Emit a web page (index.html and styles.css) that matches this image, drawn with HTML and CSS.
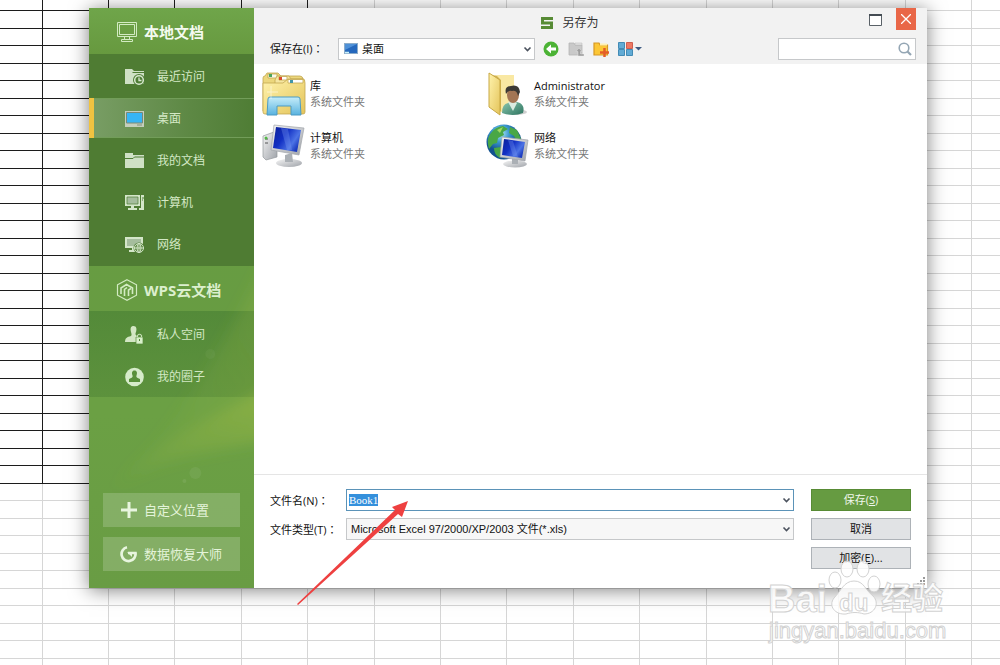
FILE: index.html
```
<!DOCTYPE html>
<html lang="zh-CN">
<head>
<meta charset="utf-8">
<meta name="viewport" content="width=device-width, initial-scale=1">
<title>另存为</title>
<link rel="stylesheet" href="styles.css">
</head>
<body>
<svg class="sheet" aria-hidden="true">
  <defs>
    <pattern id="rows" width="35" height="35" patternUnits="userSpaceOnUse"><path d="M0 10.500H35M0 28.500H35"/></pattern>
    <pattern id="cols" width="332" height="35" patternUnits="userSpaceOnUse"><path d="M42.500 0V35M108.500 0V35M174.500 0V35M241.500 0V35M307.500 0V35"/></pattern>
  </defs>
  <g class="sheet-light"><rect width="100%" height="100%" fill="url(#rows)"/><rect width="100%" height="100%" fill="url(#cols)"/></g>
  <path class="sheet-dark" d="M42.5 0V483M108.5 0V483M174.5 0V483M241.5 0V483M307.5 0V483M0 10.5H307M0 28.5H307M0 45.5H307M0 63.5H307M0 80.5H307M0 98.5H307M0 115.5H307M0 133.5H307M0 150.5H307M0 168.5H307M0 185.5H307M0 203.5H307M0 220.5H307M0 238.5H307M0 255.5H307M0 273.5H307M0 290.5H307M0 308.5H307M0 325.5H307M0 343.5H307M0 360.5H307M0 378.5H307M0 395.5H307M0 413.5H307M0 430.5H307M0 448.5H307M0 465.5H307M0 483.5H307"/>
</svg>

<main class="desktop">
  <section class="dialog" aria-label="另存为">
    <nav class="sidebar">
      <svg class="glow" viewBox="0 0 166 580" preserveAspectRatio="none" aria-hidden="true">
        <defs>
          <linearGradient id="g1" x1="0" y1="1" x2="1" y2="0"><stop offset="0" stop-color="#a5bd45" stop-opacity="0"/><stop offset="1" stop-color="#a5bd45" stop-opacity=".5"/></linearGradient>
          <filter id="soft" x="-20%" y="-20%" width="140%" height="140%"><feGaussianBlur stdDeviation="7"/></filter>
        </defs>
        <g filter="url(#soft)">
          <path d="M18 488C60 440 90 426 190 376V430C110 446 60 450 18 488Z" fill="url(#g1)"/>
          <path d="M30 470C90 420 130 350 190 230V390C120 420 80 430 30 470Z" fill="url(#g1)" opacity=".5"/>
        </g>
        <circle cx="107" cy="465" r="6" fill="#fff" opacity=".06"/><circle cx="96" cy="473" r="2" fill="#fff" opacity=".08"/>
        <circle cx="122" cy="346" r="5" fill="#fff" opacity=".04"/>
      </svg>
      <h2 class="side-head">
        <svg width="22" height="22" viewBox="0 0 22 22" fill="none" stroke="#d3ebc3"><path d="M1.500 1.500H20.500V15.500H1.500ZM3.500 3.500H18.500V13.500H3.500ZM8.500 15.500V18.500M13.500 15.500V18.500M5.500 20.500V18.500H16.500V20.500Z"/></svg>
        <span>本地文档</span>
      </h2>
      <ul class="side-list">
        <li><a href="#recent">
          <svg width="20" height="20" viewBox="0 0 20 20"><path d="M0 2H7L9 4H19V5H8L7 6H19V17H0Z" fill="#cfe0c5"/><circle cx="14" cy="13" r="6" fill="#4f7d35"/><circle cx="14" cy="13" r="4.300" fill="#4f7d35" stroke="#d8e8cf" stroke-width="1.500"/><path d="M14 10.500V13.500H16.500" fill="none" stroke="#d8e8cf" stroke-width="1.300"/></svg>
          最近访问</a></li>
        <li><a class="current" href="#desktop" aria-current="page">
          <svg width="20" height="20" viewBox="0 0 20 20"><path d="M0 2H19V18H0Z" fill="#c5cfbd"/><path d="M1.500 3.500H17.500V14H1.500Z" fill="#36b5f5" stroke="#7a8a76"/><path d="M12 16H17" stroke="#83927c"/></svg>
          桌面</a></li>
        <li><a href="#documents">
          <svg width="20" height="20" viewBox="0 0 20 20"><path d="M0 2H8V4H19V17H0Z" fill="#cfe0c5"/><path d="M0 7.500H8L9.500 6H19" fill="none" stroke="#4f7d35"/></svg>
          我的文档</a></li>
        <li><a href="#computer">
          <svg width="20" height="20" viewBox="0 0 20 20"><path d="M0 2H15V13H0Z" fill="#d4e6c9"/><path d="M2 4H13V11H2Z" fill="#a5bd9d" stroke="#4f7d35" stroke-width=".7"/><path d="M16 2H19V17H14V15H16Z M6 13H9V15H12V17H3V15H6Z" fill="#d4e6c9"/><path d="M17 5H19M17 7H18" stroke="#4f7d35"/></svg>
          计算机</a></li>
        <li><a href="#network">
          <svg width="20" height="20" viewBox="0 0 20 20"><path d="M0 2H18V13H0Z" fill="#d4e6c9"/><path d="M2 4H16V11H2Z" fill="#a5bd9d"/><path d="M7 13H10V15H12V17H4V15H7Z" fill="#d4e6c9"/><circle cx="14" cy="13" r="5.500" fill="#4f7d35"/><g fill="none" stroke="#d4e6c9"><circle cx="14" cy="13" r="4.500"/><ellipse cx="14" cy="13" rx="2" ry="4.500"/><path d="M9.500 13H18.500M14 8.500V17.500"/></g></svg>
          网络</a></li>
      </ul>
      <h2 class="side-head cloud">
        <svg width="22" height="22" viewBox="0 0 22 22" fill="none" stroke="#d3ebc3"><path d="M11 0.800L20.500 5.800V16.200L11 21.200L1.500 16.200V5.800Z" stroke-width="1.200"/><path d="M5 15V9L10.500 5.500L16.500 9V15M8.500 17V10.500L11 8.500M12.500 17V11L15 9.500" stroke-width="1.600"/></svg>
        <span>WPS云文档</span>
      </h2>
      <ul class="side-list lower">
        <li><a href="#private">
          <svg width="20" height="20" viewBox="0 0 20 20"><path d="M8.500 1C11.500 1 12 4 11 7C10 9 10.500 10 12 11V17H0C0 13 2 12 6 11C7 10 6.500 9 6 7C5 3 6 1 8.500 1Z" fill="#d3e6c4"/><path d="M11 12H18V19H11Z" fill="#d9f0cb" stroke="#578b3a" stroke-width=".7"/><path d="M12.500 12V10.500Q14.500 8 16.500 10.500V12" fill="none" stroke="#c5dfb5" stroke-width="1.200"/><path d="M14.500 14V16" stroke="#578b3a"/></svg>
          私人空间</a></li>
        <li><a href="#circle">
          <svg width="20" height="20" viewBox="0 0 20 20"><circle cx="9.500" cy="10" r="9.300" fill="#d6ebca"/><path d="M9.500 3.500C12 3.500 12.500 6 11.500 8.500C11 10 11.500 10.500 15 12V15H4V12C7.500 10.500 8 10 7.500 8.500C6.500 6 7 3.500 9.500 3.500Z" fill="#59903b"/></svg>
          我的圈子</a></li>
      </ul>
      <div class="side-actions">
        <button type="button"><svg width="18" height="18" viewBox="0 0 18 18"><path d="M9 1V17M1 9H17" stroke="#e8f5df" stroke-width="3"/></svg>自定义位置</button>
        <button type="button"><svg width="18" height="18" viewBox="0 0 18 18" fill="none"><path d="M7 2.200A7 7 0 1 0 15.500 8H8" stroke="#e8f5df" stroke-width="2.700"/><path d="M7 7L12 12V8Z" fill="#e8f5df"/></svg>数据恢复大师</button>
      </div>
    </nav>

    <div class="pane">
      <header class="top">
        <div class="titlebar">
          <h1><svg width="14" height="14" viewBox="0 0 14 14"><path d="M1 1H13V4H4V5.500H13V13H1V10H10V8.500H1Z" fill="#578b35"/></svg>另存为</h1>
          <div class="window-buttons">
            <button type="button" class="maximize" aria-label="最大化"><svg width="13" height="12" viewBox="0 0 13 12"><path d="M.5 1V11.500H12.500V1" fill="#fff" stroke="#596167"/><path d="M0 1H13" stroke="#454d54" stroke-width="2"/></svg></button>
            <button type="button" class="close" aria-label="关闭"><svg width="10" height="10" viewBox="0 0 10 10"><path d="M0 0L10 10M10 0L0 10" stroke="#fff" stroke-width="1.300"/></svg></button>
          </div>
        </div>
        <div class="toolbar">
          <label for="place">保存在(I)<span lang="zh-TW">：</span></label>
          <div class="combo place">
            <select id="place"><option>桌面</option></select>
            <svg class="combo-icon" width="14" height="12" viewBox="0 0 14 12"><path d="M0 0H14V11H0Z" fill="#8cacc9"/><path d="M1 1H13V10H1Z" fill="#2568bd"/><path d="M1 1H13L1 7Z" fill="#4f91d8"/><path d="M1 9.500H5" stroke="#c9f0fa" stroke-width="1.500"/></svg>
            <svg class="chevron" width="9" height="7" viewBox="0 0 9 7"><path d="M1.500 1.500L4.500 4.500L7.500 1.500" fill="none" stroke="#4b525e" stroke-width="1.600"/></svg>
          </div>
          <div class="tools">
            <button type="button" aria-label="后退"><svg width="16" height="16" viewBox="0 0 16 16"><circle cx="8" cy="8" r="7.500" fill="#4cb335"/><path d="M3 8L8 3.500V6.500H13V9.500H8V12.500Z" fill="#fff"/></svg></button>
            <button type="button" aria-label="向上"><svg width="16" height="16" viewBox="0 0 16 16"><path d="M1 2H6L7 4H14V14H1Z" fill="#c9c9c9" stroke="#b5b5b5" stroke-width=".8"/><path d="M7 2H14V4H7Z" fill="#e4e4e4" stroke="#b5b5b5" stroke-width=".5"/><path d="M8 10.500L11 7L14 10.500H12.500V13H16V15H10V10.500Z" fill="#9d9d9d" stroke="#eee" stroke-width=".4"/></svg></button>
            <button type="button" aria-label="新建文件夹"><svg width="16" height="16" viewBox="0 0 16 16"><path d="M1 2H6L7 4H14.500V14H1Z" fill="#fcc736" stroke="#d69724" stroke-width="1.200"/><path d="M7 2.500H14V4.500H7Z" fill="#fff0b2"/><path d="M11.500 7V16M7 11.500H16" stroke="#e35d27" stroke-width="2.500"/></svg></button>
            <button type="button" aria-label="视图"><svg width="24" height="16" viewBox="0 0 24 16"><path d="M.5 1.500H6.500V7.500H.5ZM.5 8.500H6.500V14.500H.5ZM8.500 8.500H14.500V14.500H8.500Z" fill="#62abd5" stroke="#438bb5"/><path d="M8.500 1.500H14.500V7.500H8.500Z" fill="#ef7964" stroke="#ce5e50"/><path d="M17 6H24L20.500 9.500Z" fill="#3e5c84"/></svg></button>
          </div>
          <div class="combo search">
            <input type="search" aria-label="搜索">
            <svg class="lens" width="14" height="14" viewBox="0 0 14 14" fill="none" stroke="#94a6b4"><circle cx="6" cy="6" r="4.800" stroke-width="1.600"/><path d="M9.500 9.500L13 13" stroke-width="2.200"/></svg>
          </div>
        </div>
      </header>

      <ul class="files">
        <li>
          <svg width="44" height="44" viewBox="0 0 44 44"><defs><linearGradient id="fold" x2="1" y2="1"><stop stop-color="#fff3ad"/><stop offset="1" stop-color="#e4c45a"/></linearGradient><linearGradient id="blue" x2="0" y2="1"><stop stop-color="#c6edfa"/><stop offset="1" stop-color="#58b2df"/></linearGradient></defs><g stroke="#c3a750" stroke-width=".8"><path d="M1 6Q1 4 3 4L5 1H16L19 4H38Q41 4 41 8V39H1Z" fill="#ecd77d"/><path d="M6 2H15V6H6Z" fill="#f9f8e9"/><path d="M13 8L15 4H27L29 7H42V39H13Z" fill="#f6e6a1"/><path d="M17 4.500H25V8H17Z" fill="#fff"/><path d="M1 11H21L26 7H41Q43 7 43 11V40Q43 42 41 42H3Q1 42 1 40Z" fill="url(#fold)"/><path d="M26 7.500H41V11H26Z" fill="#fff"/></g><path d="M7 2H10V5H7Z" fill="#49a45e"/><path d="M17 5H20V8H17Z" fill="#d84b2c"/><path d="M28 8H31V11H28Z" fill="#4295a8"/><path d="M6 27Q6 25 8 25H36Q38 25 38 27L39 43H29V34H15V43H5Z" fill="url(#blue)" stroke="#4c9bc4"/><path d="M9 14V27M5 20H16" stroke="#fff" opacity=".5"/></svg>
          <div><b>库</b><span>系统文件夹</span></div>
        </li>
        <li>
          <svg width="44" height="44" viewBox="0 0 44 44"><defs><linearGradient id="shirt" x2="1" y2="1"><stop stop-color="#8fcbb2"/><stop offset="1" stop-color="#2c735f"/></linearGradient></defs><path d="M4 3L27 5V38L10 40Z" fill="#d2b452"/><path d="M10 3H28V37L15 40V8Z" fill="#f9e8a3"/><path d="M3 1L14 8V43L3 35Z" fill="url(#fold)" stroke="#c8a845"/><ellipse cx="30" cy="40" rx="11" ry="3" fill="#777" opacity=".35"/><path d="M16 41Q16 32 22 31L28 29L34 31Q39 34 37 41Q27 45 16 41Z" fill="url(#shirt)"/><path d="M22 30L27 28L31 31L27 39Z" fill="#d9ebe0"/><ellipse cx="27" cy="23" rx="6" ry="8" fill="#a37554"/><path d="M20 22Q18 14 25 14Q33 12 34 20L32 24Q31 18 26 19Q22 18 20 22Z" fill="#3c3935"/></svg>
          <div><b>Administrator</b><span>系统文件夹</span></div>
        </li>
        <li>
          <svg width="44" height="44" viewBox="0 0 44 44"><defs><linearGradient id="screen" x2="1" y2=".6"><stop stop-color="#0b1f98"/><stop offset=".45" stop-color="#1230c4"/><stop offset=".8" stop-color="#4c73e5"/><stop offset="1" stop-color="#1c3cc0"/></linearGradient><linearGradient id="metal" x2="1" y2="1"><stop stop-color="#f5f5f5"/><stop offset="1" stop-color="#9fa3a9"/></linearGradient></defs><path d="M1 12L12 8L15 10V33L4 36L1 33Z" fill="url(#metal)" stroke="#94989c" stroke-width=".7"/><path d="M3 15H6M3 19H6" stroke="#555"/><circle cx="4" cy="14" r="1.500" fill="#54b947"/><ellipse cx="27" cy="39" rx="13" ry="4" fill="url(#metal)"/><path d="M23 31L30 29L31 38H23Z" fill="#abb0b5"/><path d="M12 1L42 4L37 31L9 26Z" fill="url(#metal)" stroke="#a1a5aa" stroke-width=".7"/><path d="M14 3L39 6L35 28L11 24Z" fill="url(#screen)"/><path d="M19 4L26 5L30 26L25 26Z" fill="#7997f1" opacity=".35"/></svg>
          <div><b>计算机</b><span>系统文件夹</span></div>
        </li>
        <li>
          <svg width="44" height="44" viewBox="0 0 44 44"><defs><radialGradient id="globe" cx=".4" cy=".25"><stop stop-color="#b4eff8"/><stop offset=".5" stop-color="#3b96cf"/><stop offset="1" stop-color="#12528f"/></radialGradient></defs><circle cx="18" cy="18" r="17.500" fill="url(#globe)"/><path d="M5 9Q9 3 17 2L22 5L17 8L18 11L12 14L11 19L7 20L3 25Q0 15 5 9ZM24 3L31 6L35 15L31 18L28 12L23 9ZM8 24L15 23L19 27L14 34Q8 31 8 24Z" fill="#49a746"/><path d="M11 6L17 3L14 9Z" fill="#9fda63"/><ellipse cx="29" cy="40" rx="12" ry="3.500" fill="url(#metal)"/><path d="M26 32H32V40H26Z" fill="#abb0b5"/><path d="M16 13L42 16L39 37L14 33Z" fill="url(#metal)" stroke="#a1a5aa" stroke-width=".7"/><path d="M18 15L39 18L36 34L16 31Z" fill="url(#screen)"/><path d="M22 16L27 17L32 33L27 32Z" fill="#7997f1" opacity=".35"/></svg>
          <div><b>网络</b><span>系统文件夹</span></div>
        </li>
      </ul>

      <form class="bottom">
        <div class="fields">
          <label for="name">文件名(N)<span lang="zh-TW">：</span></label>
          <div class="combo name">
            <input id="name" type="text" value="Book1" autocomplete="off" spellcheck="false">
            <svg class="chevron" width="9" height="7" viewBox="0 0 9 7"><path d="M1.500 1.500L4.500 4.500L7.500 1.500" fill="none" stroke="#4b525e" stroke-width="1.600"/></svg>
          </div>
          <label for="type">文件类型(T)<span lang="zh-TW">：</span></label>
          <div class="combo type">
            <select id="type"><option>Microsoft Excel 97/2000/XP/2003 文件(*.xls)</option></select>
            <svg class="chevron" width="9" height="7" viewBox="0 0 9 7"><path d="M1.500 1.500L4.500 4.500L7.500 1.500" fill="none" stroke="#4b525e" stroke-width="1.600"/></svg>
          </div>
        </div>
        <div class="commands">
          <button type="submit" class="primary">保存(<u>S</u>)</button>
          <button type="button">取消</button>
          <button type="button">加密(<u>E</u>)...</button>
        </div>
        <svg class="grip" width="8" height="8" viewBox="0 0 8 8"><path d="M6 0h2v2H6zM3 3h2v2H3zM6 3h2v2H6zM0 6h2v2H0zM3 6h2v2H3zM6 6h2v2H6z" fill="#999"/></svg>
      </form>
    </div>
  </section>

  <svg class="arrow" width="112" height="105" viewBox="0 0 112 105" aria-hidden="true"><path d="M0 103L98 9L95 6L111 0L105 16L101 13L1 104Z" fill="#ee4040"/></svg>
  <svg class="watermark" width="182" height="90" viewBox="0 0 182 90" role="img" aria-label="Baidu 经验">
    <g fill="#fff" fill-opacity=".85" stroke="#d2d2d2" stroke-width="1">
      <text class="wm-big" x="2" y="52">Bai</text>
      <ellipse cx="69" cy="20" rx="6" ry="8"/><ellipse cx="81" cy="9" rx="6" ry="8"/><ellipse cx="97" cy="9" rx="6" ry="8"/><ellipse cx="108" cy="24" rx="6" ry="8"/>
      <path d="M88 21C98 21 99 30 107 36C114 43 109 54 98 54C92 52 86 52 80 54C69 55 62 46 68 38C75 31 78 21 88 21Z"/>
      <text class="wm-du" x="73" y="51">du</text>
      <text class="wm-cjk" x="115" y="49">经验</text>
      <text class="wm-url" x="3" y="78">jingyan.baidu.com</text>
    </g>
  </svg>
</main>
<script src="app.js"></script>
</body>
</html>
```
FILE: styles.css
```
* { box-sizing: border-box; }
body {
  margin: 0;
  min-height: 100vh;
  background: #fff;
  color: #111;
  font: 11px/16px "Open Sans", "Noto Sans CJK SC", sans-serif;
}
h1, h2, ul { margin: 0; padding: 0; font-weight: normal; list-style: none; }
button, input, select { font: inherit; color: inherit; margin: 0; border-radius: 0; }
button { padding: 0; border: 0; background: none; display: flex; align-items: center; justify-content: center; }
svg { display: block; flex: none; }

.sheet { position: absolute; inset: 0; width: 100%; height: 100%; }
.sheet path { fill: none; stroke: #d6d6d6; }
.sheet .sheet-dark { stroke: #1c1c1c; }

.desktop { position: relative; min-height: 100vh; padding: 8px 73px 0 89px; overflow: hidden; }
.dialog {
  display: grid;
  grid-template-columns: 165px 1fr;
  background: #fff;
  box-shadow: 0 2px 18px rgba(0, 0, 0, .5);
}

.sidebar { position: relative; display: flex; flex-direction: column; background: linear-gradient(#69a044, #6ba044 70%, #699c44); color: #d3e8c5; }
.glow { position: absolute; inset: 0; width: 100%; height: 100%; pointer-events: none; }
.side-head {
  display: flex; align-items: center; gap: 6px;
  height: 46px; padding: 2px 0 0 27px;
  background: linear-gradient(#6fa54a, #67993f);
  font: bold 15px/20px "Open Sans", "Noto Sans CJK SC", sans-serif;
  color: #f4faef;
}
.side-head.cloud { background: rgba(103, 154, 66, .7); color: #dcefce; height: 45px; }
.side-list { height: 212px; padding-top: 2px; background: rgba(72, 115, 48, .8); font-size: 12px; }
.side-list.lower { height: 86px; padding-top: 3px; background: linear-gradient(rgba(65, 120, 48, .55), rgba(75, 128, 52, .45)); }
.side-list a {
  display: flex; align-items: center; gap: 12px;
  height: 40px; margin-bottom: 2px; padding: 1px 0 0 36px;
  color: inherit; text-decoration: none;
}
.side-list a.current {
  padding-left: 31px;
  border-left: 5px solid #f0c341;
  background: linear-gradient(90deg, #789d64, #5d8844 60%, #4f7d35);
  box-shadow: inset 0 1px #729d59, inset 0 -1px #729d59;
}
.side-actions { position: relative; display: grid; gap: 10px; margin-top: auto; padding: 0 14px 17px 14px; }
.side-actions button {
  justify-content: flex-start; gap: 6px; height: 34px; padding-left: 17px;
  background: rgba(255, 255, 255, .18); color: #e4f4da; font-size: 13px;
}

.pane { display: flex; flex-direction: column; min-width: 0; }
.top { padding: 0 11px 4px 16px; background: #f2f2f2; }
.titlebar { display: flex; height: 30px; }
.titlebar h1 { flex: 1; display: flex; align-items: center; justify-content: center; gap: 8px; font-size: 12px; color: #333; }
.window-buttons { display: flex; justify-content: flex-end; gap: 14px; }
.window-buttons button { height: 22px; }
.window-buttons .maximize { padding-top: 2px; }
.window-buttons .close { width: 20px; background: #e96748; }
.toolbar { display: flex; align-items: center; height: 22px; }
.toolbar label { width: 68px; }

.combo { display: grid; align-items: center; }
.combo > * { grid-area: 1 / 1; }
.combo svg { pointer-events: none; }
.combo select, .combo input { width: 100%; height: 22px; padding: 0 4px; border: 1px solid #c6c8ca; background: #fff; appearance: none; outline: 0; }
.chevron { justify-self: end; margin-right: 3px; }
.place { width: 197px; }
.place select { padding-left: 23px; }
.combo-icon { margin-left: 6px; }
.tools { display: flex; gap: 9px; padding-left: 8px; }
.search { width: 138px; margin-left: auto; }
.lens { justify-self: end; margin-right: 4px; }

.files {
  flex: 1; min-height: 411px; padding: 8px 0 0 8px;
  display: grid; grid-template-columns: 224px 224px; grid-auto-rows: 44px; align-content: start; row-gap: 8px;
  border-bottom: 1px solid #e5e5e5;
}
.files li { display: flex; align-items: center; gap: 4px; }
.files b { display: block; font-weight: normal; }
.files span { color: #777; }

.bottom { position: relative; display: flex; gap: 17px; height: 113px; padding: 14px 16px 0 16px; }
.fields { flex: 1; display: grid; grid-template-columns: 76px 1fr; grid-auto-rows: 22px; row-gap: 7px; align-content: start; align-items: center; }
.fields label { padding-top: 2px; }
.name input { border-color: #5b93b8; padding: 0 2px; font: 11px/12px "Liberation Serif", serif; }
.name input::selection { background: #3490dc; color: #fff; }
.type select { background: #f7f7f7; font-family: "Liberation Sans", "Noto Sans CJK SC", sans-serif; }
.commands { width: 100px; display: grid; gap: 7px; align-content: start; }
.commands button { height: 22px; border: 1px solid #adb2b7; background: #e1e3e5; }
.commands .primary { border-color: #588b35; background: #669b41; color: #f1f8ec; }
.grip { position: absolute; right: 2px; bottom: 3px; }

.arrow { position: absolute; left: 297px; top: 501px; pointer-events: none; }
.watermark { position: absolute; left: 766px; top: 560px; pointer-events: none; font-family: "Liberation Sans", "Noto Sans CJK SC", sans-serif; }
.wm-big { font-size: 38px; font-weight: bold; }
.wm-du { font-size: 24px; font-weight: bold; }
.wm-cjk { font-size: 31px; font-weight: bold; }
.wm-url { font-size: 22px; }
```
FILE: app.js
```
const nameField = document.getElementById("name");
nameField.focus();
nameField.select();
```
